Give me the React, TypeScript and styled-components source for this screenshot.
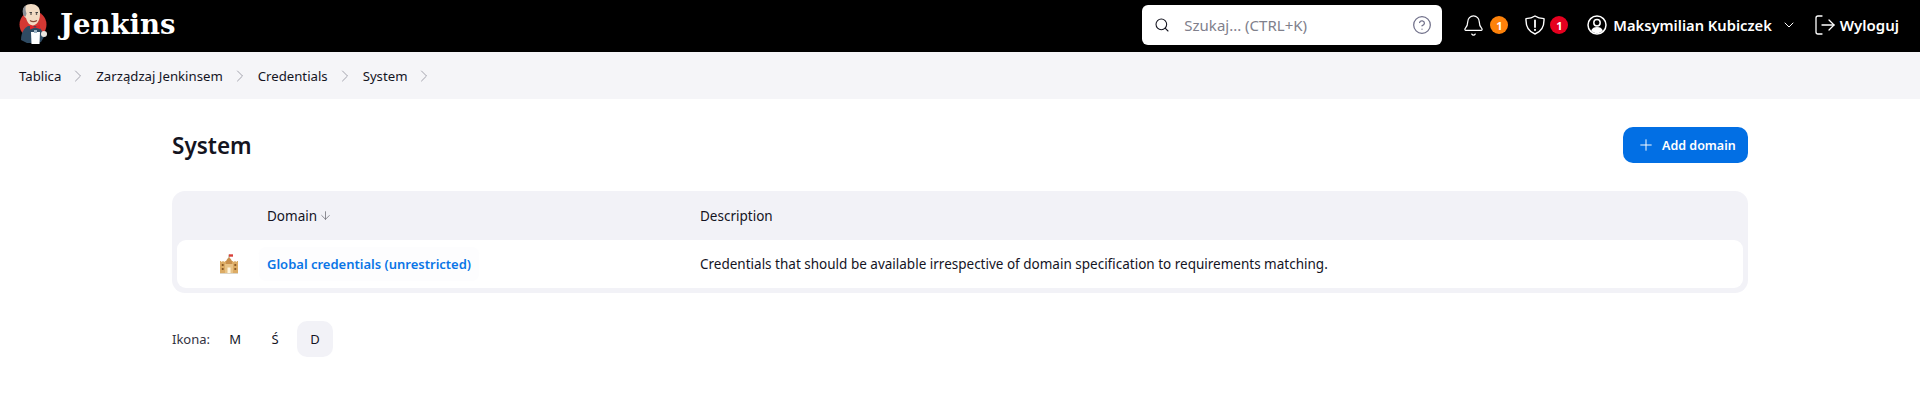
import { Fragment } from "react";
import styled, { createGlobalStyle } from "styled-components";
import { ArrowDown, Bell, ChevronDown, ChevronRight, CircleHelp, LogOut, Plus, Search } from "lucide-react";

const Global = createGlobalStyle`
  html, body { margin: 0; padding: 0; background: #fff; }
  body {
    font-family: "Noto Sans", "Open Sans", sans-serif;
    color: #14141f;
    font-size: 13px;
  }
`;

const Header = styled.header`
  height: 52px;
  box-sizing: border-box;
  padding: 0 0 2px 18px;
  background: #000;
  display: flex;
  align-items: center;
  color: #fff;
`;

const Brand = styled.div`
  display: flex;
  align-items: center;
  gap: 12px;
`;

const BrandName = styled.span`
  font-family: "DejaVu Serif", "Liberation Serif", serif;
  font-weight: 700;
  font-size: 27.5px;
  margin-bottom: 2px;
`;

const Spacer = styled.div`
  flex: 1;
`;

const SearchBox = styled.div`
  width: 300px;
  height: 40px;
  background: #fff;
  border-radius: 6px;
  display: flex;
  align-items: center;
  padding: 0 10px 0 12px;
  box-sizing: border-box;
  color: #14141f;
  margin-right: 20px;
`;

const SearchText = styled.span`
  flex: 1;
  margin-left: 14px;
  color: #80808c;
  font-size: 15px;
`;

const Notice = styled.div`
  display: flex;
  align-items: center;
  gap: 5px;
  margin-right: 17px;
`;

const Badge = styled.span<{ $bg: string }>`
  width: 18px;
  height: 18px;
  border-radius: 50%;
  background: ${(p) => p.$bg};
  color: #fff;
  font-size: 11px;
  font-weight: 700;
  display: flex;
  align-items: center;
  justify-content: center;
`;

const UserMenu = styled.div`
  display: flex;
  align-items: center;
  margin-left: 2px;
  margin-right: 16px;
`;

const UserName = styled.span`
  font-weight: 600;
  font-size: 14.7px;
  margin-left: 6px;
  margin-right: 9px;
`;

const Logout = styled.div`
  display: flex;
  align-items: center;
  gap: 3px;
  font-weight: 600;
  font-size: 15px;
  margin-right: 21px;
`;

const Breadcrumbs = styled.nav`
  height: 47px;
  background: #f5f5f8;
  display: flex;
  align-items: center;
  padding-left: 19px;
`;

const Crumb = styled.a`
  color: #14141f;
  font-size: 13.2px;
`;

const CrumbSep = styled.span`
  display: flex;
  color: #9a9aa5;
  margin: 0 8px 0 7px;
`;

const Main = styled.main`
  padding: 28px 172px 0;
`;

const TitleRow = styled.div`
  display: flex;
  align-items: center;
  justify-content: space-between;
  height: 36px;
  margin-bottom: 28px;
`;

const Title = styled.h1`
  margin: 0;
  padding-top: 2px;
  font-size: 22.5px;
  font-weight: 600;
  line-height: 34px;
`;

const AddButton = styled.button`
  width: 125px;
  height: 36px;
  border: 0;
  border-radius: 10px;
  background: #026fe4;
  color: #fff;
  font: 600 12.5px "Noto Sans", sans-serif;
  display: flex;
  align-items: center;
  gap: 7px;
  padding: 0 0 0 14px;
`;

const Table = styled.div`
  background: #f2f2f7;
  border-radius: 13px;
  padding: 0 5px 5px;
`;

const TableHead = styled.div`
  display: grid;
  grid-template-columns: 90px 433px 1fr;
  height: 49px;
  align-items: center;
  font-size: 13.5px;
`;

const TableRow = styled.div`
  display: grid;
  grid-template-columns: 90px 433px 1fr;
  height: 48px;
  align-items: center;
  background: #fff;
  border-radius: 9px;
  font-size: 13.5px;
`;

const HeadCell = styled.div`
  display: flex;
  align-items: center;
  gap: 2px;
`;

const SortArrow = styled.span`
  display: flex;
  color: #55555f;
`;

const IconCell = styled.div`
  display: flex;
  justify-content: center;
  padding-left: 14px;
`;

const DomainLink = styled.a`
  justify-self: start;
  color: #0a75e6;
  font-weight: 600;
  font-size: 13px;
  background: #fdfdfe;
  border-radius: 2px;
  box-shadow: 0 0 0 8px #fdfdfe;
`;

const SizeRow = styled.div`
  display: flex;
  align-items: center;
  margin-top: 28px;
`;

const SizeLabel = styled.span`
  font-size: 13px;
  color: #33333f;
  margin-right: 7px;
`;

const SizeOption = styled.span<{ $active?: boolean }>`
  width: 36px;
  height: 36px;
  border-radius: 10px;
  display: flex;
  align-items: center;
  justify-content: center;
  font-size: 13px;
  margin-right: 4px;
  background: ${(p) => (p.$active ? "#f2f2f7" : "transparent")};
`;

function JenkinsLogo() {
  return (
    <svg width="30" height="42" viewBox="0 0 30 42">
      <circle cx="15" cy="20.500" r="13.500" fill="#d33833" />
      <path d="M3 36c0-7 3-12 7-14l9 0c4 2 6 6 7 11l-3 5-4 1H9z" fill="#2f4b63" />
      <path d="M5 7C5 3 8 0 13 0c5 0 9 3 9 8 0 3 0 7-2 10-2 3-5 4-7 3-3-1-4-4-5-7-2-1-3-4-3-7z" fill="#f2dcc4" />
      <path d="M5 10C4 6 5 3 8 1.500 7 4 7.500 7 8.500 9.500l-.8 3C6.500 12.500 5.500 11.500 5 10z" fill="#8a8f96" />
      <path d="M11.500 8.500h2.500M17.500 8.500h2.500" stroke="#444" strokeWidth="1" />
      <circle cx="13" cy="10" r=".8" fill="#222" />
      <circle cx="18.500" cy="10" r=".8" fill="#222" />
      <path d="M12 16.500c2 1.500 4.500 1.500 7 0" stroke="#8a4a3a" fill="none" strokeWidth="1.100" />
      <path d="M12 21l5 2 5-2.500v4.500l-5-1.500-5 2z" fill="#e0262c" />
      <path d="M13 28h9l-.5 12h-8z" fill="#fff" />
      <path d="M16 26l3 0 0 3-3 0z" fill="#9db4c4" />
      <circle cx="26" cy="30" r="3" fill="#e9e6e0" />
    </svg>
  );
}

function ShieldAlert() {
  return (
    <svg width="20" height="22" viewBox="0 0 20 22" fill="none" stroke="#fff" strokeWidth="1.400" strokeLinejoin="round" strokeLinecap="round">
      <path d="M10 2c2.400 1.600 5.200 2.400 9 2.600.400 7.400-2 13-9 15.400C3 17.600.600 12 1 4.600 4.800 4.400 7.600 3.600 10 2z" />
      <path d="M10 6.500v6.500" strokeWidth="1.800" />
      <path d="M10 15.800v.2" strokeWidth="2" />
    </svg>
  );
}

function UserIcon() {
  return (
    <svg width="20" height="20" viewBox="0 0 20 20">
      <circle cx="10" cy="10" r="9" fill="none" stroke="#fff" strokeWidth="1.500" />
      <circle cx="10" cy="7.800" r="3.200" fill="none" stroke="#fff" strokeWidth="1.500" />
      <path d="M4.200 15.500c1-2.500 3-3.500 5.800-3.500s4.800 1 5.800 3.500c-1.500 1.700-3.500 2.700-5.800 2.700s-4.300-1-5.800-2.700z" fill="#fff" />
    </svg>
  );
}

function CastleIcon() {
  return (
    <svg width="18" height="20" viewBox="0 0 18 20">
      <path d="M9 .5v4" stroke="#a07a50" strokeWidth=".8" />
      <path d="M9 .3h4v2.400H9z" fill="#d8403a" />
      <path d="M9 3.500c2.500 1.500 3.500 4 3.500 7h-7c0-3 1-5.500 3.500-7z" fill="#c9904c" />
      <path d="M0 7h1.300v1h1V7h1.400v1h1V7H6v12H0zM12 7h1.300v1h1V7h1.400v1h1V7H18v12h-6z" fill="#dcab64" />
      <rect x="5" y="10" width="8" height="9" fill="#e8c285" />
      <rect x="7.500" y="13.500" width="3" height="5.500" fill="#fff6e0" />
      <rect x="1.800" y="10" width="1.800" height="2" fill="#8a5a26" />
      <rect x="14.400" y="10" width="1.800" height="2" fill="#8a5a26" />
      <rect x="1.800" y="14" width="1.800" height="2" fill="#8a5a26" />
      <rect x="14.400" y="14" width="1.800" height="2" fill="#8a5a26" />
      <rect x="0" y="19" width="18" height="1" fill="#dcd6c8" />
    </svg>
  );
}

const crumbs = ["Tablica", "Zarządzaj Jenkinsem", "Credentials", "System"];

export default function App() {
  return (
    <>
      <Global />
      <Header>
        <Brand>
          <JenkinsLogo />
          <BrandName>Jenkins</BrandName>
        </Brand>
        <Spacer />
        <SearchBox>
          <Search size={16} strokeWidth={1.6} />
          <SearchText>Szukaj... (CTRL+K)</SearchText>
          <CircleHelp size={20} strokeWidth={1.5} color="#70708a" />
        </SearchBox>
        <Notice>
          <Bell size={23} strokeWidth={1.3} />
          <Badge $bg="#fe820a">1</Badge>
        </Notice>
        <Notice>
          <ShieldAlert />
          <Badge $bg="#e6001f">1</Badge>
        </Notice>
        <UserMenu>
          <UserIcon />
          <UserName>Maksymilian Kubiczek</UserName>
          <ChevronDown size={16} strokeWidth={1.5} />
        </UserMenu>
        <Logout>
          <LogOut size={24} strokeWidth={1.3} />
          Wyloguj
        </Logout>
      </Header>
      <Breadcrumbs>
        {crumbs.map((c) => (
          <Fragment key={c}>
            <Crumb>{c}</Crumb>
            <CrumbSep>
              <ChevronRight size={20} strokeWidth={1.1} />
            </CrumbSep>
          </Fragment>
        ))}
      </Breadcrumbs>
      <Main>
        <TitleRow>
          <Title>System</Title>
          <AddButton>
            <Plus size={18} strokeWidth={1.3} />
            Add domain
          </AddButton>
        </TitleRow>
        <Table>
          <TableHead>
            <div />
            <HeadCell>
              Domain
              <SortArrow>
                <ArrowDown size={13} strokeWidth={1.2} />
              </SortArrow>
            </HeadCell>
            <HeadCell>Description</HeadCell>
          </TableHead>
          <TableRow>
            <IconCell>
              <CastleIcon />
            </IconCell>
            <DomainLink>Global credentials (unrestricted)</DomainLink>
            <div>Credentials that should be available irrespective of domain specification to requirements matching.</div>
          </TableRow>
        </Table>
        <SizeRow>
          <SizeLabel>Ikona:</SizeLabel>
          <SizeOption>M</SizeOption>
          <SizeOption>Ś</SizeOption>
          <SizeOption $active>D</SizeOption>
        </SizeRow>
      </Main>
    </>
  );
}
